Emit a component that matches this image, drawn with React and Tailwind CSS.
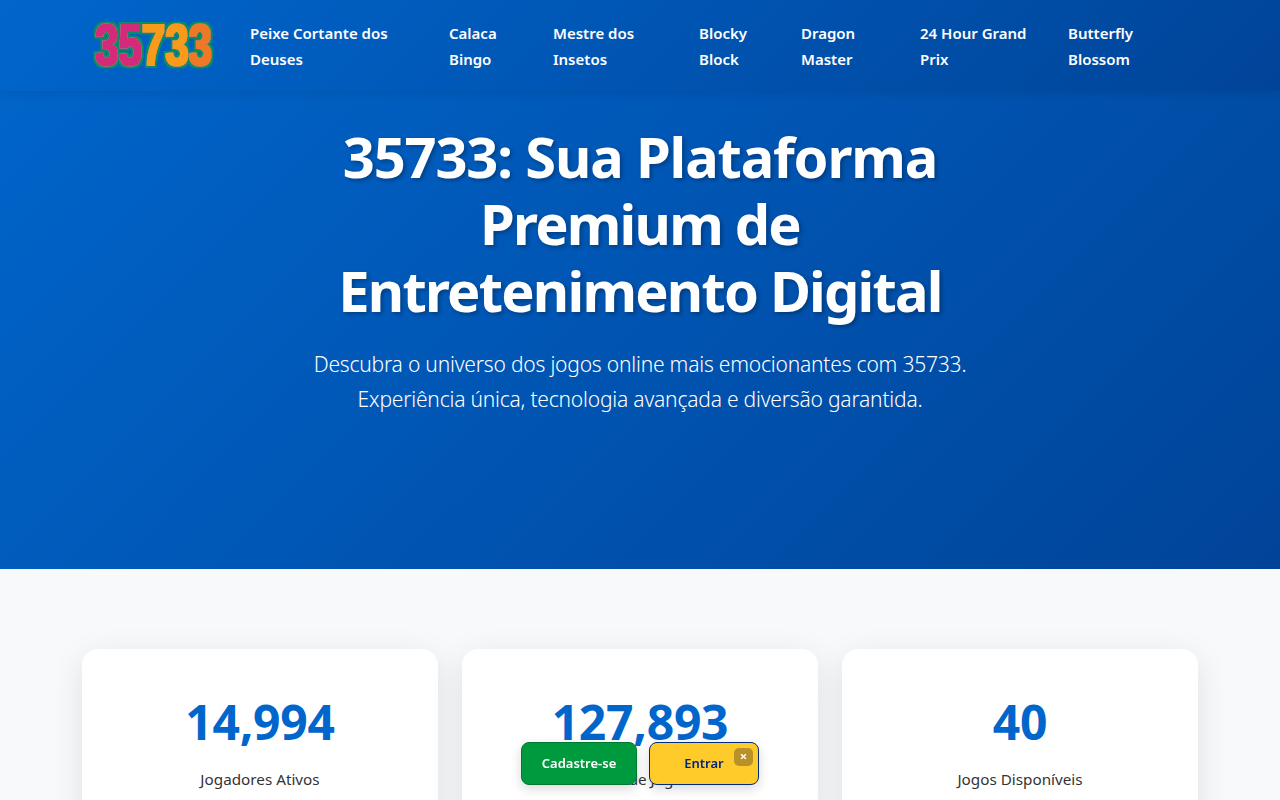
import React from 'react';

const font = { fontFamily: '"Noto Sans", "Open Sans", sans-serif' };

const navItems = [
    { label: "Peixe Cortante dos Deuses", width: "w-[199px]" },
    { label: "Calaca Bingo", width: "w-[104px]" },
    { label: "Mestre dos Insetos", width: "w-[146px]" },
    { label: "Blocky Block", width: "w-[102px]" },
    { label: "Dragon Master", width: "w-[119px]" },
    { label: "24 Hour Grand Prix", width: "w-[148px]" },
    { label: "Butterfly Blossom", width: "w-[100px]" },
];

const stats = [
    { value: "14,994", label: "Jogadores Ativos" },
    { value: "127,893", label: "Total de Jogos" },
    { value: "40", label: "Jogos Disponíveis" },
];

// logo is real text in an svg, squeezed, fattened and outlined by a filter
const Logo = () => (
    <svg width="122" height="52" viewBox="0 0 122 52" className="shrink-0">
        <defs>
            <filter id="logoOutline" x="-5%" y="-10%" width="110%" height="120%">
                <feMorphology in="SourceGraphic" operator="dilate" radius="1" result="fat" />
                <feMorphology in="SourceAlpha" operator="dilate" radius="3" result="grown" />
                <feFlood floodColor="#0d8a66" />
                <feComposite in2="grown" operator="in" result="edge" />
                <feMerge>
                    <feMergeNode in="edge" />
                    <feMergeNode in="fat" />
                </feMerge>
            </filter>
        </defs>
        <g filter="url(#logoOutline)">
            <text transform="translate(2 45) scale(0.725 1)" fontFamily='"Liberation Sans", sans-serif' fontWeight="700" fontSize="58">
                <tspan fill="#d42a7c">35</tspan>
                <tspan fill="#fa9a1c">73</tspan>
                <tspan fill="#ee7826">3</tspan>
            </text>
        </g>
    </svg>
);

const App = () => {
    return (
        <div className="min-h-screen bg-[#f8f9fa] text-[#333]" style={font}>
            <div className="bg-[linear-gradient(135deg,#0066cc,#004499)]">
                {/* Header */}
                <header className="h-[91px] bg-[linear-gradient(135deg,#0066cc,#004499)] shadow-[0_2px_10px_rgba(0,0,0,0.1)] relative">
                    <div className="flex items-center h-full pl-[93px]">
                        <Logo />
                        <nav className="flex ml-[35px]">
                            {navItems.map((item) => (
                                <a key={item.label} className={`${item.width} pr-[30px] text-white text-[15px] leading-[26px] font-semibold`}>
                                    {item.label}
                                </a>
                            ))}
                        </nav>
                    </div>
                </header>

                {/* Hero */}
                <section className="h-[478px] pt-[32px] flex flex-col items-center text-center text-white">
                    <h1 className="w-[660px] text-[56px] leading-[67px] font-bold [text-shadow:2px_2px_4px_rgba(0,0,0,0.3)]">
                        <span className="block tracking-[-1.15px]">35733: Sua Plataforma</span>
                        <span className="block tracking-[-1.8px]">Premium de</span>
                        <span className="block tracking-[-1.8px]">Entretenimento Digital</span>
                    </h1>
                    <p className="w-[800px] mt-[23px] text-[21px] leading-[35px] font-light tracking-[-0.2px]">
                        Descubra o universo dos jogos online mais emocionantes com 35733.<br />
                        Experiência única, tecnologia avançada e diversão garantida.
                    </p>
                </section>
            </div>

            {/* Stats */}
            <section className="pt-[80px] pb-[80px] px-[82px]">
                <div className="grid grid-cols-3 gap-[24px]">
                    {stats.map((stat) => (
                        <div key={stat.label} className="bg-white rounded-[16px] shadow-[0_8px_32px_rgba(0,0,0,0.1)] px-[32px] py-[40px] text-center">
                            <div className="text-[48px] leading-[66px] font-bold text-[#0066cc] tracking-[-0.25px]">{stat.value}</div>
                            <div className="mt-[11px] text-[15.25px] leading-[26px]">{stat.label}</div>
                        </div>
                    ))}
                </div>
            </section>

            {/* Floating actions */}
            <div className="fixed left-[521px] top-[742px] flex gap-[12px]">
                <button className="w-[116px] h-[43px] rounded-[8px] bg-[#009a3e] border border-[#007a33] text-white text-[13px] font-semibold shadow-[0_4px_12px_rgba(0,0,0,0.15)]">
                    Cadastre-se
                </button>
                <div className="relative">
                    <button className="w-[110px] h-[43px] rounded-[8px] bg-[#ffcb2b] border border-[#002b7f] text-[#002776] text-[13px] font-semibold shadow-[0_4px_12px_rgba(0,0,0,0.15)]">
                        Entrar
                    </button>
                    <span className="absolute top-[6px] right-[6px] w-[19px] h-[18px] rounded-[5px] bg-[#b8912a] text-white text-[13px] font-bold leading-[17px] text-center">
                        ×
                    </span>
                </div>
            </div>
        </div>
    );
};

export default App;
